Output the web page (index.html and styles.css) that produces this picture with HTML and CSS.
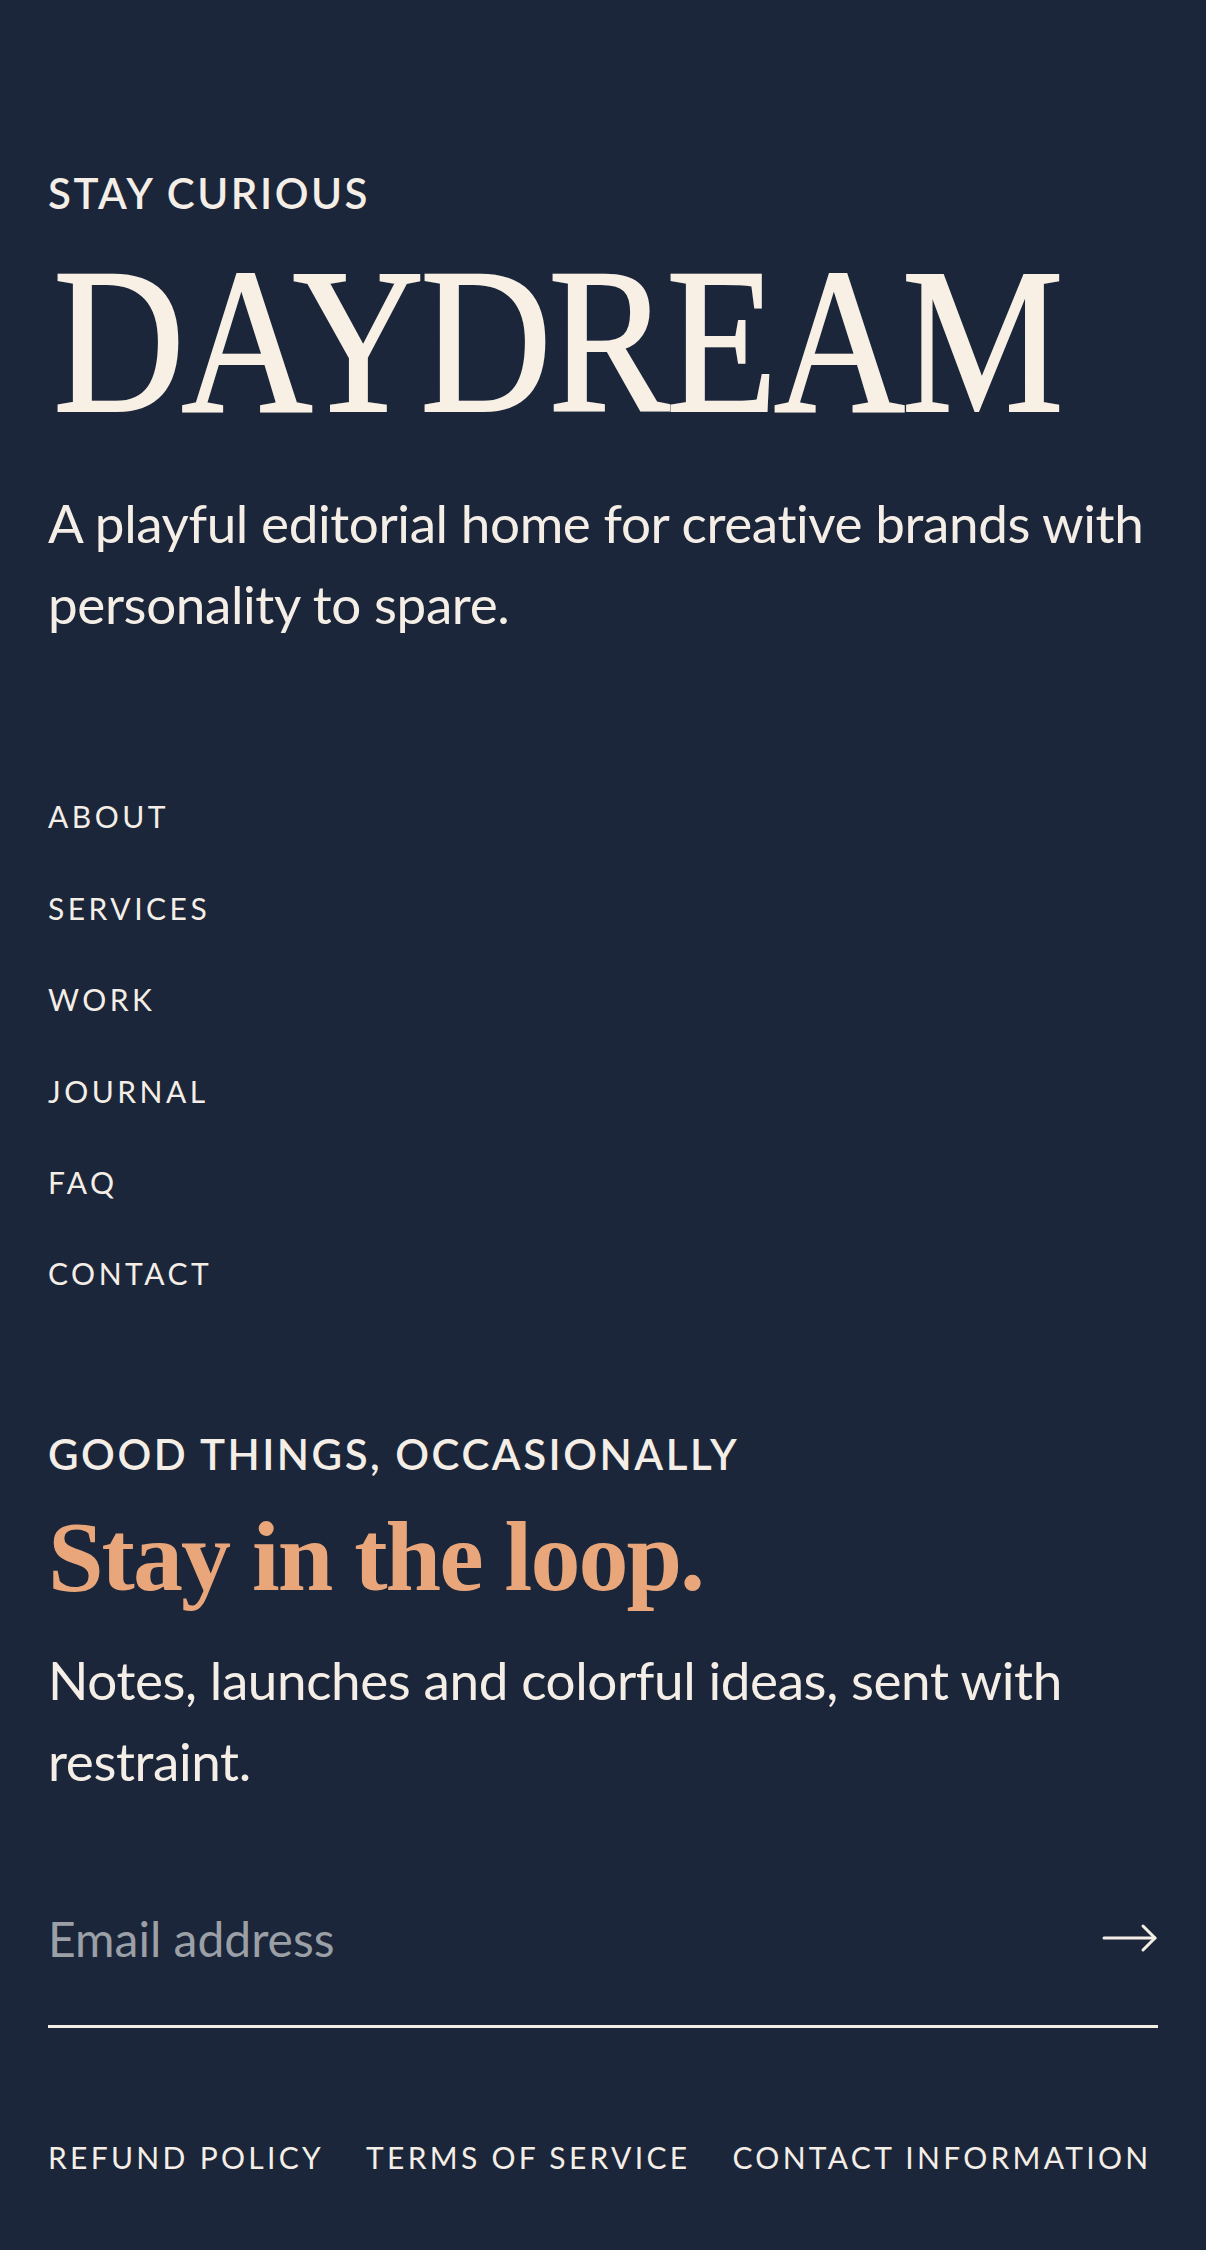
FILE: index.html
```html
<!DOCTYPE html>
<html lang="en">
<head>
  <meta charset="UTF-8">
  <title>Daydream</title>
  <link rel="stylesheet" href="styles.css">
</head>
<body>
  <footer class="site-footer">
    <section class="brand">
      <p class="eyebrow">Stay curious</p>
      <h1 class="wordmark">DAYDREAM</h1>
      <p class="lead">A playful editorial home for creative brands with personality to spare.</p>
    </section>

    <nav class="footer-nav">
      <ul>
        <li><a href="#">About</a></li>
        <li><a href="#">Services</a></li>
        <li><a href="#">Work</a></li>
        <li><a href="#">Journal</a></li>
        <li><a href="#">FAQ</a></li>
        <li><a href="#">Contact</a></li>
      </ul>
    </nav>

    <section class="newsletter">
      <p class="eyebrow">Good things, occasionally</p>
      <h2>Stay in the loop.</h2>
      <p class="lead">Notes, launches and colorful ideas, sent with restraint.</p>
      <form class="subscribe" onsubmit="return false">
        <input type="email" placeholder="Email address">
        <button type="submit" aria-label="Subscribe">
          <svg width="56" height="30" viewBox="0 0 56 30" fill="none" stroke="currentColor" stroke-width="3" stroke-linecap="round" stroke-linejoin="round">
            <path d="M2 15H53"/>
            <path d="M41 3L53 15L41 27"/>
          </svg>
        </button>
      </form>
    </section>

    <ul class="legal">
      <li><a href="#">Refund policy</a></li>
      <li><a href="#">Terms of service</a></li>
      <li><a href="#">Contact information</a></li>
    </ul>
  </footer>
</body>
</html>
```

FILE: styles.css
```css
:root {
  --navy: #1b263a;
  --cream: #f4eee6;
  --paper: #f8f0e4;
  --peach: #e9a67a;
  --muted: #9b9fa6;
}

body {
  margin: 0;
  background: var(--navy);
  color: var(--cream);
  font-family: Lato, "Noto Sans", sans-serif;
}

a {
  color: inherit;
  text-decoration: none;
}

.site-footer {
  padding: 168px 48px 72px;
}

.eyebrow {
  margin: 0;
  font-size: 42px;
  line-height: 1.2;
  font-weight: 600;
  letter-spacing: 0.06em;
  text-transform: uppercase;
}

.wordmark {
  margin: 19px 0 0;
  padding-left: 6px;
  font-family: "Liberation Serif", serif;
  font-weight: 400;
  font-size: 208px;
  line-height: 1;
  letter-spacing: -4px;
  color: var(--paper);
  -webkit-text-stroke: 2px var(--paper);
  transform: scaleX(0.875);
  transform-origin: left center;
  white-space: nowrap;
}

.lead {
  margin: 37px 0 0;
  font-size: 53px;
  line-height: 81px;
  letter-spacing: -0.4px;
}

.footer-nav ul {
  list-style: none;
  margin: 153px 0 0;
  padding: 0;
  display: flex;
  flex-direction: column;
  gap: 53px;
}

.footer-nav li,
.legal li {
  font-size: 30px;
  line-height: 38.4px;
  letter-spacing: 3.5px;
  text-transform: uppercase;
  white-space: nowrap;
}

.newsletter {
  margin-top: 136px;
}

.newsletter h2 {
  margin: 23px 0 0;
  font-family: "Liberation Serif", serif;
  font-weight: 700;
  font-size: 100px;
  line-height: 1.1;
  letter-spacing: -2px;
  color: var(--peach);
}

.newsletter .lead {
  margin-top: 27px;
}

.subscribe {
  margin-top: 101px;
  display: flex;
  align-items: center;
  padding-bottom: 51px;
  border-bottom: 3px solid var(--cream);
}

.subscribe input {
  flex: 1;
  height: 72px;
  padding: 0;
  border: none;
  background: none;
  font-family: Lato, "Noto Sans", sans-serif;
  font-size: 48px;
  color: var(--cream);
  outline: none;
}

.subscribe input::placeholder {
  color: var(--muted);
}

.subscribe button {
  display: flex;
  padding: 0;
  border: none;
  background: none;
  color: var(--cream);
  cursor: pointer;
}

.legal {
  list-style: none;
  margin: 110px 0 0;
  padding: 0;
  display: flex;
  gap: 42px;
}

.legal li {
  letter-spacing: 3.3px;
}
```
